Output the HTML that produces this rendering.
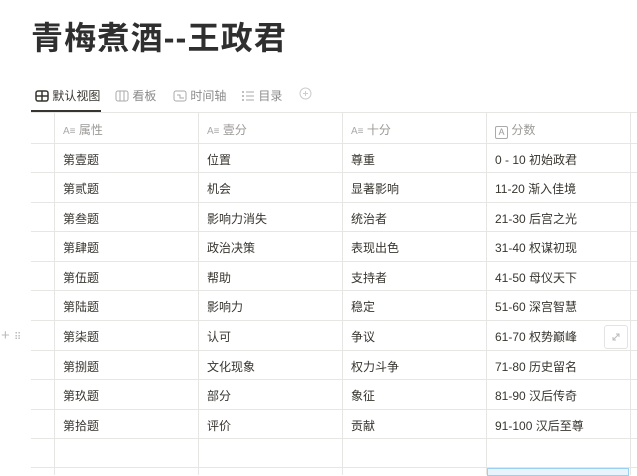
<!DOCTYPE html>
<html><head><meta charset="utf-8"><style>
body{margin:0;width:637px;height:475px;overflow:hidden;background:#fff;font-family:"Liberation Sans","Noto Sans CJK SC",sans-serif;color:#37352f;position:relative}
.t{position:absolute;left:31px;top:13px;font-size:32px;font-weight:bold;color:#2f2f2f;letter-spacing:1.2px}
.tabs{position:absolute;top:87px;left:35px;font-size:12px;color:#8a8a8a;white-space:nowrap}
.tabs span{position:absolute;top:0}
.ul{position:absolute;left:31px;top:110px;width:70px;height:2px;background:#37352f}
.hl{position:absolute;left:31px;width:606px;height:1px;background:#e6e6e4}
.vl{position:absolute;top:113px;height:362px;width:1px;background:#e6e6e4}
.c{position:absolute;font-size:12px;color:#37352f;white-space:nowrap}
.h{color:#9b9a97}
</style></head><body>
<div class="t">青梅煮酒--王政君</div>
<div class="tabs">
<span style="left:0;color:#37352f"><svg width="14" height="12" style="vertical-align:-2px"><rect x="1" y="1" width="12" height="10" rx="2" fill="none" stroke="#37352f" stroke-width="1.5"/><line x1="1" y1="6" x2="13" y2="6" stroke="#37352f" stroke-width="1.5"/><line x1="7" y1="1" x2="7" y2="11" stroke="#37352f" stroke-width="1.5"/></svg> 默认视图</span>
<span style="left:80px"><svg width="14" height="12" style="vertical-align:-2px"><rect x="1" y="1" width="12" height="10" rx="2" fill="none" stroke="#aaa"/><line x1="5" y1="1" x2="5" y2="11" stroke="#aaa"/><line x1="9" y1="1" x2="9" y2="11" stroke="#aaa"/></svg> 看板</span>
<span style="left:138px"><svg width="14" height="12" style="vertical-align:-2px"><rect x="1" y="1" width="12" height="10" rx="2" fill="none" stroke="#aaa"/><path d="M4 5h3v3h4" fill="none" stroke="#aaa"/></svg> 时间轴</span>
<span style="left:206px"><svg width="14" height="12" style="vertical-align:-2px"><g fill="#aaa"><circle cx="2" cy="2" r="1"/><circle cx="2" cy="6" r="1"/><circle cx="2" cy="10" r="1"/><rect x="5" y="1.5" width="8" height="1"/><rect x="5" y="5.5" width="8" height="1"/><rect x="5" y="9.5" width="8" height="1"/></g></svg> 目录</span>
<span style="left:264px"><svg width="13" height="13" style="vertical-align:-2px"><circle cx="6.5" cy="6.5" r="5.5" fill="none" stroke="#ccc"/><path d="M6.5 4v5M4 6.5h5" stroke="#ccc"/></svg></span>
</div>
<div class="ul"></div>
<div class="hl" style="top:112px"></div>
<div class="hl" style="top:143px"></div>
<div class="hl" style="top:172px"></div>
<div class="hl" style="top:202px"></div>
<div class="hl" style="top:231px"></div>
<div class="hl" style="top:261px"></div>
<div class="hl" style="top:290px"></div>
<div class="hl" style="top:320px"></div>
<div class="hl" style="top:350px"></div>
<div class="hl" style="top:379px"></div>
<div class="hl" style="top:409px"></div>
<div class="hl" style="top:438px"></div>
<div class="hl" style="top:467px"></div>
<div class="vl" style="left:54px"></div>
<div class="vl" style="left:198px"></div>
<div class="vl" style="left:342px"></div>
<div class="vl" style="left:486px"></div>
<div class="vl" style="left:630px"></div>
<div style="position:absolute;left:487px;top:468px;width:142px;height:8px;background:#e8f3fb;border:1px solid #9cd0f0;box-sizing:border-box"></div>
<div class="c h" style="left:63px;top:121px"><span style="font-size:10px;color:#aaa">A≡</span> 属性</div>
<div class="c h" style="left:207px;top:121px"><span style="font-size:10px;color:#aaa">A≡</span> 壹分</div>
<div class="c h" style="left:351px;top:121px"><span style="font-size:10px;color:#aaa">A≡</span> 十分</div>
<div class="c h" style="left:495px;top:121px"><span style="display:inline-block;width:11px;height:11px;border:1px solid #aaa;border-radius:2px;font-size:9px;line-height:11px;text-align:center;vertical-align:-1px;color:#999">A</span> 分数</div>
<div id="rows"></div>
<div class="c" style="left:1px;top:327px;color:#bbb;font-size:15px">+ <span style="font-size:10px">⠿</span></div>
<div style="position:absolute;left:604px;top:325px;width:22px;height:22px;border:1px solid #e3e3e3;border-radius:3px;background:#fff"><svg width="22" height="22"><path d="M8 14l6-6M11 8h3v3M8 11v3h3" fill="none" stroke="#bbb"/></svg></div>
<script>
var d=[["第壹题","位置","尊重","0 - 10 初始政君"],["第贰题","机会","显著影响","11-20 渐入佳境"],["第叁题","影响力消失","统治者","21-30 后宫之光"],["第肆题","政治决策","表现出色","31-40 权谋初现"],["第伍题","帮助","支持者","41-50 母仪天下"],["第陆题","影响力","稳定","51-60 深宫智慧"],["第柒题","认可","争议","61-70 权势巅峰"],["第捌题","文化现象","权力斗争","71-80 历史留名"],["第玖题","部分","象征","81-90 汉后传奇"],["第拾题","评价","贡献","91-100 汉后至尊"]];
var tops=[143,172,202,231,261,290,320,350,379,409],h="";
d.forEach(function(r,i){[63,207,351,495].forEach(function(x,j){h+='<div class="c" style="left:'+x+'px;top:'+(tops[i]+8)+'px">'+r[j]+'</div>';});});
document.getElementById('rows').innerHTML=h;
</script>
</body></html>
